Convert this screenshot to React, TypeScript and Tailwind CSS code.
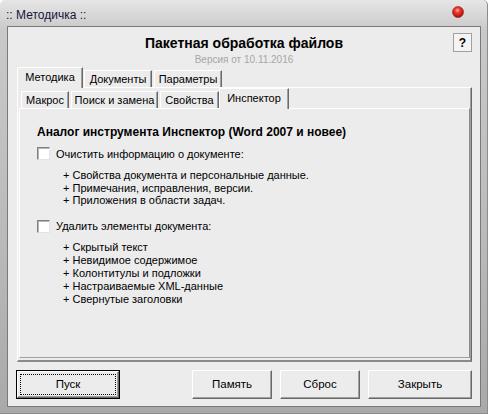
import type { ReactNode } from 'react';

const font = { fontFamily: '"Liberation Sans", Arial, sans-serif' };

function Tab({ label, width, active }: { label: string; width: string; active?: boolean }) {
  return (
    <div
      className={
        active
          ? `${width} relative z-10 -mb-px flex h-[21px] items-start justify-center border-l border-t border-r border-l-white border-t-white border-r-[#696969] bg-[#ececec] pt-[2px] shadow-[inset_-1px_0_0_#a0a0a0]`
          : `${width} flex h-[17px] items-center justify-center border-l border-t border-r border-l-white border-t-white border-r-[#696969] bg-[#ececec] shadow-[inset_-1px_0_0_#a0a0a0]`
      }
    >
      <span className="whitespace-nowrap text-[11px] leading-[14px] text-black">{label}</span>
    </div>
  );
}

function Check({ label, className }: { label: string; className?: string }) {
  return (
    <div className={`flex h-[13px] items-center gap-[6px] ${className ?? ''}`}>
      <span className="block h-[13px] w-[13px] border border-t-[#808080] border-l-[#808080] border-r-[#e3e3e3] border-b-[#e3e3e3] bg-white shadow-[inset_1px_1px_0_#b5b5b5]" />
      <span className="text-[11px] leading-[14px] text-black">{label}</span>
    </div>
  );
}

function Button({ children, width, primary }: { children: ReactNode; width: string; primary?: boolean }) {
  if (primary) {
    return (
      <div className={`${width} h-[29px] border border-black bg-[#ececec]`}>
        <div className="h-full border border-t-white border-l-white border-r-[#696969] border-b-[#696969] p-[2px] shadow-[inset_-1px_-1px_0_#a0a0a0]">
          <div className="flex h-full items-center justify-center border border-dotted border-black text-[11.5px] text-black">
            {children}
          </div>
        </div>
      </div>
    );
  }
  return (
    <div
      className={`${width} flex h-[29px] items-center justify-center border border-t-white border-l-white border-r-[#696969] border-b-[#696969] bg-[#ececec] text-[11.5px] text-black shadow-[inset_-1px_-1px_0_#a0a0a0]`}
    >
      {children}
    </div>
  );
}

export default function App() {
  const clear = [
    '+ Свойства документа и персональные данные.',
    '+ Примечания, исправления, версии.',
    '+ Приложения в области задач.',
  ];
  const remove = [
    '+ Скрытый текст',
    '+ Невидимое содержимое',
    '+ Колонтитулы и подложки',
    '+ Настраиваемые XML-данные',
    '+ Свернутые заголовки',
  ];

  return (
    <div
      style={font}
      className="flex h-[414px] w-[488px] flex-col overflow-hidden rounded-t-[5px] border-r border-b border-r-[#8c8c8c] border-b-[#8c8c8c] bg-[linear-gradient(to_bottom,#e6e6e6,#c9c9c9_30px,#b9b9b9_60%,#a9a9a9)]"
    >
      {/* title bar */}
      <div className="flex h-[26px] shrink-0 items-start justify-between pl-[6px] pr-[23px]">
        <span className="mt-[7px] text-[12px] leading-[16px] text-[#16163a]">:: Методичка ::</span>
        <svg className="mt-[6px]" width="12" height="12" viewBox="0 0 12 12">
          <defs>
            <radialGradient id="dot" cx="0.45" cy="0.35" r="0.65">
              <stop offset="0" stopColor="#ffb0a8" />
              <stop offset="0.35" stopColor="#f03a2c" />
              <stop offset="1" stopColor="#a80c06" />
            </radialGradient>
          </defs>
          <circle cx="6" cy="6" r="5.5" fill="url(#dot)" stroke="#8a1a14" strokeWidth="0.6" />
        </svg>
      </div>

      {/* client area */}
      <div className="mx-[7px] flex h-[381px] w-[474px] shrink-0 flex-col border border-[#7a7a7a] bg-[#ececec] px-[8px]">
        <div className="relative h-[40px] shrink-0">
          <div className="mt-[8px] text-center text-[14px] font-bold leading-[16px] text-black">
            Пакетная обработка файлов
          </div>
          <div className="mt-[3px] text-center text-[10px] leading-[12px] text-[#a6a6a6]">Версия от 10.11.2016</div>
          <div className="absolute right-0 top-[6px] flex h-[19px] w-[19px] items-center justify-center border border-[#a0a0a0] bg-[#f4f4f4] text-[12px] font-bold leading-none text-black">
            ?
          </div>
        </div>

        {/* outer tabs */}
        <div className="ml-[1px] flex h-[20px] shrink-0 items-end">
          <Tab label="Методика" width="w-[66px]" active />
          <div className="ml-[1px]" />
          <Tab label="Документы" width="w-[68px]" />
          <div className="ml-[2px]" />
          <Tab label="Параметры" width="w-[68px]" />
        </div>
        <div className="ml-[1px] flex h-[275px] shrink-0 flex-col border-t border-l border-r border-b-2 border-t-white border-l-white border-r-[#696969] border-b-[#8a8a8a] pl-[1px] pr-[1px] pb-[2px] shadow-[inset_-1px_0_0_#a0a0a0]">
          {/* inner tabs */}
          <div className="flex h-[20px] shrink-0 items-end pl-[2px]">
            <Tab label="Макрос" width="w-[48px]" />
            <div className="ml-[2px]" />
            <Tab label="Поиск и замена" width="w-[87px]" />
            <div className="ml-[2px]" />
            <Tab label="Свойства" width="w-[59px]" />
            <Tab label="Инспектор" width="w-[70px]" active />
          </div>
          <div className="flex-1 border-t border-l border-r border-b border-t-white border-l-white border-r-[#8a8a8a] border-b-[#a0a0a0] pl-[17px] pt-[16px]">
            <div className="text-[12px] font-bold leading-[14px] text-black">
              Аналог инструмента Инспектор (Word 2007 и новее)
            </div>
            <Check className="mt-[8px]" label="Очистить информацию о документе:" />
            <div className="mt-[9px] pl-[26px]">
              {clear.map(t => (
                <div key={t} className="text-[11px] leading-[12.5px] text-black">
                  {t}
                </div>
              ))}
            </div>
            <Check className="mt-[13px]" label="Удалить элементы документа:" />
            <div className="mt-[8px] pl-[26px]">
              {remove.map(t => (
                <div key={t} className="text-[11px] leading-[13px] text-black">
                  {t}
                </div>
              ))}
            </div>
          </div>
        </div>

        {/* buttons */}
        <div className="mt-[8px] flex h-[29px] shrink-0">
          <Button width="w-[104px]" primary>
            Пуск
          </Button>
          <div className="ml-[72px]" />
          <Button width="w-[80px]">Память</Button>
          <div className="ml-[8px]" />
          <Button width="w-[80px]">Сброс</Button>
          <div className="ml-[8px]" />
          <Button width="w-[104px]">Закрыть</Button>
        </div>
      </div>
    </div>
  );
}
